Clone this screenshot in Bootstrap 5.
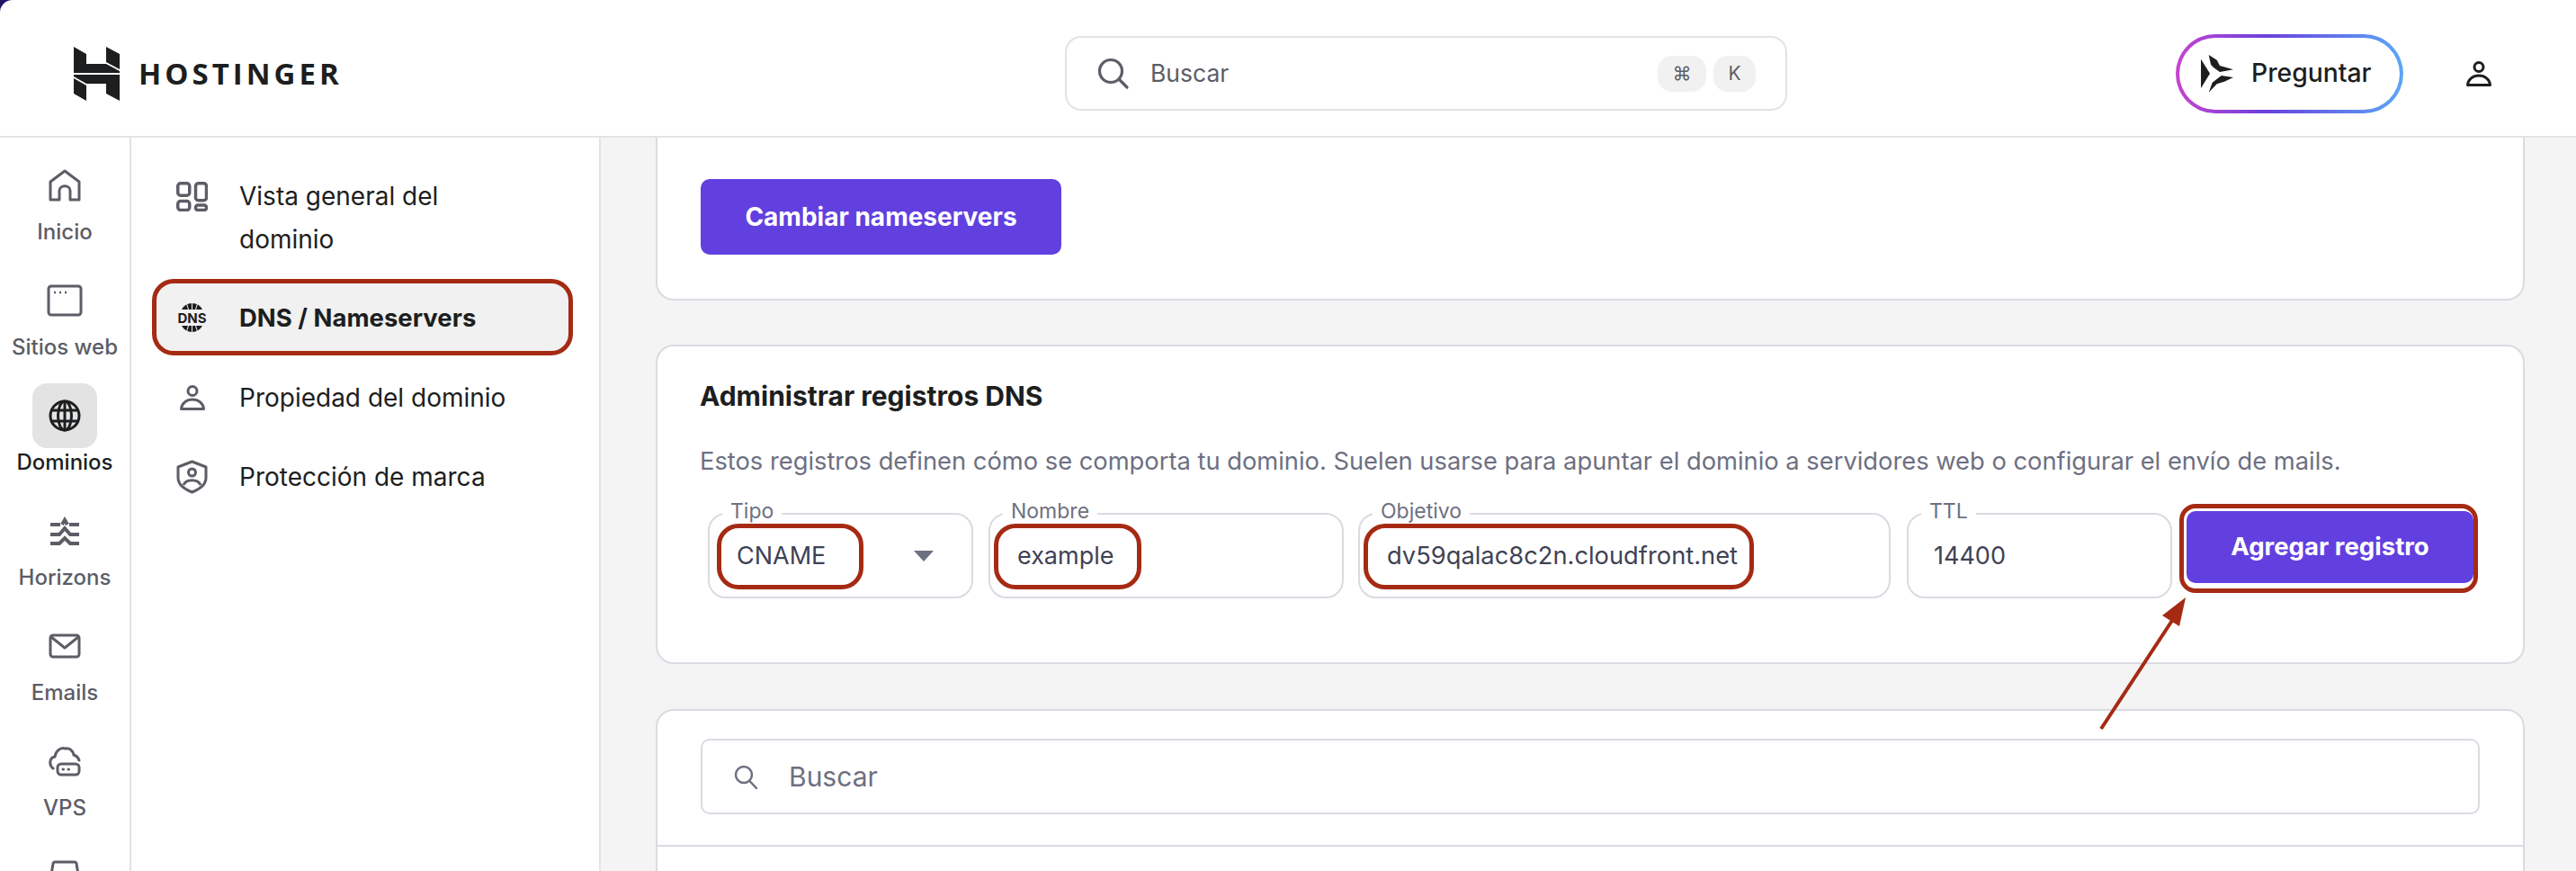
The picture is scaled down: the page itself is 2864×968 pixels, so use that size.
<!doctype html>
<html lang="es">
<head>
<meta charset="utf-8">
<title>Hostinger DNS</title>
<link href="https://cdn.jsdelivr.net/npm/bootstrap@5.3.0/dist/css/bootstrap.min.css" rel="stylesheet">
<style>
html,body{height:968px;overflow:hidden;background:#1f1466;}
body{font-family:"Inter","Liberation Sans",sans-serif;color:#1d1e20;}
.shell{position:relative;width:2864px;height:968px;background:#fff;border-top-left-radius:14px;overflow:hidden;}
.topbar{height:153px;border-bottom:2px solid #e3e3e3;padding:12px 94px 0 82px;position:relative;}
.brand{gap:21px;width:1102px;flex:none;}
.brand-name{font-family:"Open Sans","Liberation Sans",sans-serif;font-weight:700;font-size:33px;letter-spacing:4px;line-height:1;color:#1d1e20;}
.hsearch{width:803px;height:83px;border:2px solid #e3e3e3;border-radius:18px;padding:0 33px 0 34px;flex:none;}
.hsearch-label{font-size:26.500px;color:#5c5d66;margin-left:23px;}
.keycap{height:40px;background:#f1f1f1;border-radius:16px;font-size:21px;color:#5c5d66;}
.keycap-a{width:54px;margin-right:8px;}
.keycap-b{width:47px;}
.ask{margin-left:432px;width:253px;height:88px;border-radius:44px;border:4px solid transparent;background:linear-gradient(#fff,#fff) padding-box,linear-gradient(90deg,#c743cf 0%,#6a42dd 40%,#5aa7f7 100%) border-box;padding-left:24px;flex:none;}
.ask-label{font-size:28.300px;font-weight:500;margin-left:20px;}
.acct{margin-left:70px;flex:none;}
.mainrow{height:815px;}
.rail{width:146px;border-right:2px solid #e3e3e3;flex:none;padding-top:17px;}
.rail-item{height:128px;text-align:center;color:#5c5d66;font-size:24px;font-weight:500;line-height:28px;}
.rail-tile{width:72px;height:72px;margin:0 auto;border-radius:16px;}
.rail-on{color:#1d1e20;}
.rail-on .rail-tile{background:#e3e3e3;}
.rail-text{margin-top:2px;white-space:nowrap;}
.subnav{width:522px;border-right:2px solid #e3e3e3;flex:none;padding:30px 29px 0 23px;}
.subitem{font-size:28px;line-height:48px;padding:11px 0 11px 27px;gap:35px;}
.subitem svg{flex:none;}
.ico-first{margin-top:8px;}
.ico-narrow{margin:0 3.500px;}
.sub-on{font-size:27.500px;font-weight:700;height:85px;border:5px solid #a52a14;border-radius:24px;background:#f1f1f1;align-items:center;margin:9px 0 12px;padding:0 0 0 22px;}
.sub-last{margin-top:18px;}
.stage{flex:1;background:#f4f4f4;padding:0 57px 0 61px;min-width:0;}
.panel{background:#fff;border:2px solid #dadbe2;border-radius:20px;}
.panel-a{height:181px;border-top:0;border-top-left-radius:0;border-top-right-radius:0;padding:46px 0 0 48px;}
.panel-b{height:355px;margin-top:49px;padding:37px 48px 0 47px;}
.panel-c{height:300px;margin-top:50px;padding-top:31px;}
.cta{background:#6240e0;border:0;color:#fff;font-weight:700;border-radius:10px;white-space:nowrap;}
.cta-a{width:401px;height:84px;font-size:28px;}
.cta-b{width:319px;height:80px;font-size:27.600px;}
.ptitle{font-size:30px;font-weight:700;line-height:36px;margin:0;}
.pdesc{font-size:27.300px;line-height:40px;color:#6d7081;margin:35px 0 0;white-space:nowrap;}
.fields{margin:27px 0 0 9px;}
.fbox{height:95px;margin-top:10px;border:2px solid #dadbe2;border-radius:20px;padding:10px 4px 0;position:relative;flex:none;}
.fleg{position:absolute;top:-17px;left:14px;background:#fff;padding:0 9px;font-size:23px;line-height:26px;color:#6d7081;}
.fval{height:73px;border:5px solid transparent;border-radius:24px;font-size:27px;color:#3f4254;padding-left:21px;white-space:nowrap;}
.marked{border-color:#a52a14;}
.f-tipo{width:295px;margin-right:17px;}
.f-tipo .fval{width:163px;margin-left:4px;padding-left:17px;}
.f-nom{width:395px;margin-right:16px;}
.f-nom .fval{width:164px;}
.f-obj{width:592px;margin-right:18px;}
.f-obj .fval{width:434px;font-size:27.300px;}
.f-ttl{width:295px;margin-right:8px;}
.f-ttl .fval{padding-left:19px;}
.caret{position:absolute;left:227px;top:40px;width:0;height:0;border-left:11.500px solid transparent;border-right:11.500px solid transparent;border-top:12px solid #6d7081;}
.cta-ring{border:5px solid #a52a14;border-radius:18px;padding:3px 0 6px 3px;flex:none;}
.tsearch{height:84px;margin:0 48px;border:2px solid #dadbe2;border-radius:10px;padding-left:35px;}
.tsearch-label{font-size:30px;color:#6d7081;margin-left:35px;}
.tsep{border-top:2px solid #dadbe2;margin-top:34px;}
.callout{position:absolute;left:2320px;top:655px;}
</style>
</head>
<body>
<div class="shell">
  <header class="topbar d-flex align-items-center">
    <div class="brand d-flex align-items-center">
      <svg width="51" height="60" viewBox="0 0 51 60" fill="#1d1e20" aria-hidden="true">
        <path d="M0 0 14 8V19H36L51 27V29H0Z"/><path d="M36 0 51 8V25L36 17Z"/>
        <path d="M0 31H51V60L36 52V41H14L0 33Z"/><path d="M0 35 14 43V60L0 52Z"/>
      </svg>
      <span class="brand-name">HOSTINGER</span>
    </div>
    <div class="hsearch d-flex align-items-center">
      <svg width="36" height="36" viewBox="0 0 36 36" fill="none" stroke="#5c5d66" stroke-width="3.200" stroke-linecap="round" aria-hidden="true"><circle cx="15" cy="15" r="12.500"/><path d="M24 24 33 33"/></svg>
      <span class="hsearch-label">Buscar</span>
      <span class="keycap keycap-a d-flex align-items-center justify-content-center ms-auto">⌘</span>
      <span class="keycap keycap-b d-flex align-items-center justify-content-center">K</span>
    </div>
    <div class="ask d-flex align-items-center">
      <svg width="36" height="42" viewBox="0 0 36 42" fill="#1d1e20" aria-hidden="true">
        <path d="M0 4.700 10 20.700 0 37Z"/><path d="M8.700 0 17.700 5.700 21 12 36 16.300 21 19 14 14 11 10.700Z"/><path d="M8.700 41.700 12.700 30.700 22.700 23 36 25 26 29.700 17.700 32.300Z"/>
      </svg>
      <span class="ask-label">Preguntar</span>
    </div>
    <svg class="acct" width="28" height="28" viewBox="0 0 28 28" fill="none" stroke="#1d1e20" stroke-width="3" stroke-linejoin="round" aria-hidden="true"><circle cx="14" cy="6.500" r="5"/><path d="M1.500 26.500C2 20 7.500 16 14 16S26 20 26.500 26.500Z"/></svg>
  </header>
  <div class="mainrow d-flex">
    <nav class="rail">
      <div class="rail-item"><div class="rail-tile d-flex align-items-center justify-content-center"><svg width="36" height="36" viewBox="0 0 36 36" fill="none" stroke="#5c5d66" stroke-width="3" stroke-linejoin="round"><path d="M2 14 18 2 34 14V34H24V24C24 17 12 17 12 24V34H2Z"/></svg></div><div class="rail-text">Inicio</div></div>
      <div class="rail-item"><div class="rail-tile d-flex align-items-center justify-content-center"><svg width="40" height="36" viewBox="0 0 40 36" fill="none" stroke="#5c5d66" stroke-width="3"><rect x="2" y="2" width="36" height="32" rx="3"/><path d="M8 9H10M14 9H16M20 9H22" stroke-width="2.500"/></svg></div><div class="rail-text">Sitios web</div></div>
      <div class="rail-item rail-on"><div class="rail-tile d-flex align-items-center justify-content-center"><svg width="36" height="36" viewBox="0 0 36 36" fill="none" stroke="#1d1e20" stroke-width="3"><circle cx="18" cy="18" r="16"/><ellipse cx="18" cy="18" rx="7.500" ry="16"/><path d="M3 12H33M3 24H33M18 2V34"/></svg></div><div class="rail-text">Dominios</div></div>
      <div class="rail-item"><div class="rail-tile d-flex align-items-center justify-content-center"><svg width="34" height="32" viewBox="0 0 34 32" fill="none" stroke="#5c5d66" stroke-width="4"><path d="M1 9H12M20 9 17 4 14 9M22 9H33M1 20H11L17 13 23 20H33M1 30H11L17 24 23 30H33"/></svg></div><div class="rail-text">Horizons</div></div>
      <div class="rail-item"><div class="rail-tile d-flex align-items-center justify-content-center"><svg width="36" height="28" viewBox="0 0 36 28" fill="none" stroke="#5c5d66" stroke-width="3" stroke-linejoin="round"><rect x="2" y="2" width="32" height="24" rx="3"/><path d="M3 4 18 16 33 4"/></svg></div><div class="rail-text">Emails</div></div>
      <div class="rail-item"><div class="rail-tile d-flex align-items-center justify-content-center"><svg width="36" height="34" viewBox="0 0 36 34" fill="none" stroke="#5c5d66" stroke-width="3" stroke-linecap="round"><path d="M5 25C0 21 1 13 7 12 8 5 14 1 19 3 23 2 27 5 28 10 31 11 33 13 34 16"/><rect x="10" y="20" width="24" height="12" rx="4"/><path d="M16 26H16.500M22 26H22.500"/></svg></div><div class="rail-text">VPS</div></div>
      <div class="rail-item"><div class="rail-tile d-flex align-items-center justify-content-center"><svg width="40" height="36" viewBox="0 0 40 36" fill="none" stroke="#5c5d66" stroke-width="3"><path d="M2 34 7 4C7 3 8 2 9 2H31C32 2 33 3 33 4L38 34Z"/></svg></div></div>
    </nav>
    <aside class="subnav">
      <div class="subitem d-flex">
        <svg class="ico-first" width="35" height="33" viewBox="0 0 35 33" fill="none" stroke="#5c5d66" stroke-width="3.500"><rect x="1.750" y="1.750" width="13" height="13.500" rx="3"/><rect x="21.500" y="1.750" width="12" height="19" rx="3"/><rect x="1.750" y="21.500" width="13" height="10" rx="3"/><rect x="21.500" y="26" width="12" height="5.500" rx="2.500"/></svg>
        <div>Vista general del<br>dominio</div>
      </div>
      <div class="subitem sub-on d-flex">
        <svg width="35" height="36" viewBox="0 0 35 36" aria-hidden="true"><path d="M6 9a13 13 0 0 1 23 0ZM6 27a13 13 0 0 0 23 0Z" fill="#1d1e20"/><path d="M17.500 0V9M11 1 13.500 9M24 1 21.500 9M17.500 27V36M11 35 13.500 27M24 35 21.500 27" stroke="#f1f1f1" stroke-width="1"/><text x="17.500" y="23.500" font-size="15" font-weight="700" text-anchor="middle" font-family="Inter,sans-serif" fill="#1d1e20">DNS</text></svg>
        <div>DNS / Nameservers</div>
      </div>
      <div class="subitem d-flex align-items-center">
        <svg class="ico-narrow" width="28" height="28" viewBox="0 0 28 28" fill="none" stroke="#5c5d66" stroke-width="3" stroke-linejoin="round"><circle cx="14" cy="6.500" r="5"/><path d="M1.500 26.500C2 20 7.500 16 14 16S26 20 26.500 26.500Z"/></svg>
        <div>Propiedad del dominio</div>
      </div>
      <div class="subitem sub-last d-flex align-items-center">
        <svg width="35" height="38" viewBox="0 0 35 38" fill="none" stroke="#5c5d66" stroke-width="3" stroke-linejoin="round"><path d="M17.500 2 33 8V20C33 28 25 33 17.500 36 10 33 2 28 2 20V8Z"/><circle cx="17.500" cy="14" r="4"/><path d="M8 28C11 21 24 21 27 28"/></svg>
        <div>Protección de marca</div>
      </div>
    </aside>
    <main class="stage">
      <section class="panel panel-a"><button class="btn cta cta-a" type="button">Cambiar nameservers</button></section>
      <section class="panel panel-b">
        <h2 class="ptitle">Administrar registros DNS</h2>
        <p class="pdesc">Estos registros definen cómo se comporta tu dominio. Suelen usarse para apuntar el dominio a servidores web o configurar el envío de mails.</p>
        <div class="fields d-flex align-items-start">
          <div class="fbox f-tipo"><span class="fleg">Tipo</span><div class="fval marked d-flex align-items-center">CNAME</div><span class="caret"></span></div>
          <div class="fbox f-nom"><span class="fleg">Nombre</span><div class="fval marked d-flex align-items-center">example</div></div>
          <div class="fbox f-obj"><span class="fleg">Objetivo</span><div class="fval marked d-flex align-items-center">dv59qalac8c2n.cloudfront.net</div></div>
          <div class="fbox f-ttl"><span class="fleg">TTL</span><div class="fval d-flex align-items-center">14400</div></div>
          <div class="cta-ring"><button class="btn cta cta-b" type="button">Agregar registro</button></div>
        </div>
      </section>
      <section class="panel panel-c">
        <div class="tsearch d-flex align-items-center">
          <svg width="26" height="27" viewBox="0 0 26 27" fill="none" stroke="#6d7081" stroke-width="2.500" stroke-linecap="round"><circle cx="11" cy="11" r="9"/><path d="M17.500 18 25 26"/></svg>
          <span class="tsearch-label">Buscar</span>
        </div>
        <div class="tsep"></div>
      </section>
    </main>
  </div>
  <svg class="callout" width="120" height="165" viewBox="0 0 120 165" aria-hidden="true"><path d="M16 155 98 30" stroke="#a52a14" stroke-width="4" fill="none"/><path d="M110 9 103 41 84 29Z" fill="#a52a14"/></svg>
</div>
</body>
</html>
